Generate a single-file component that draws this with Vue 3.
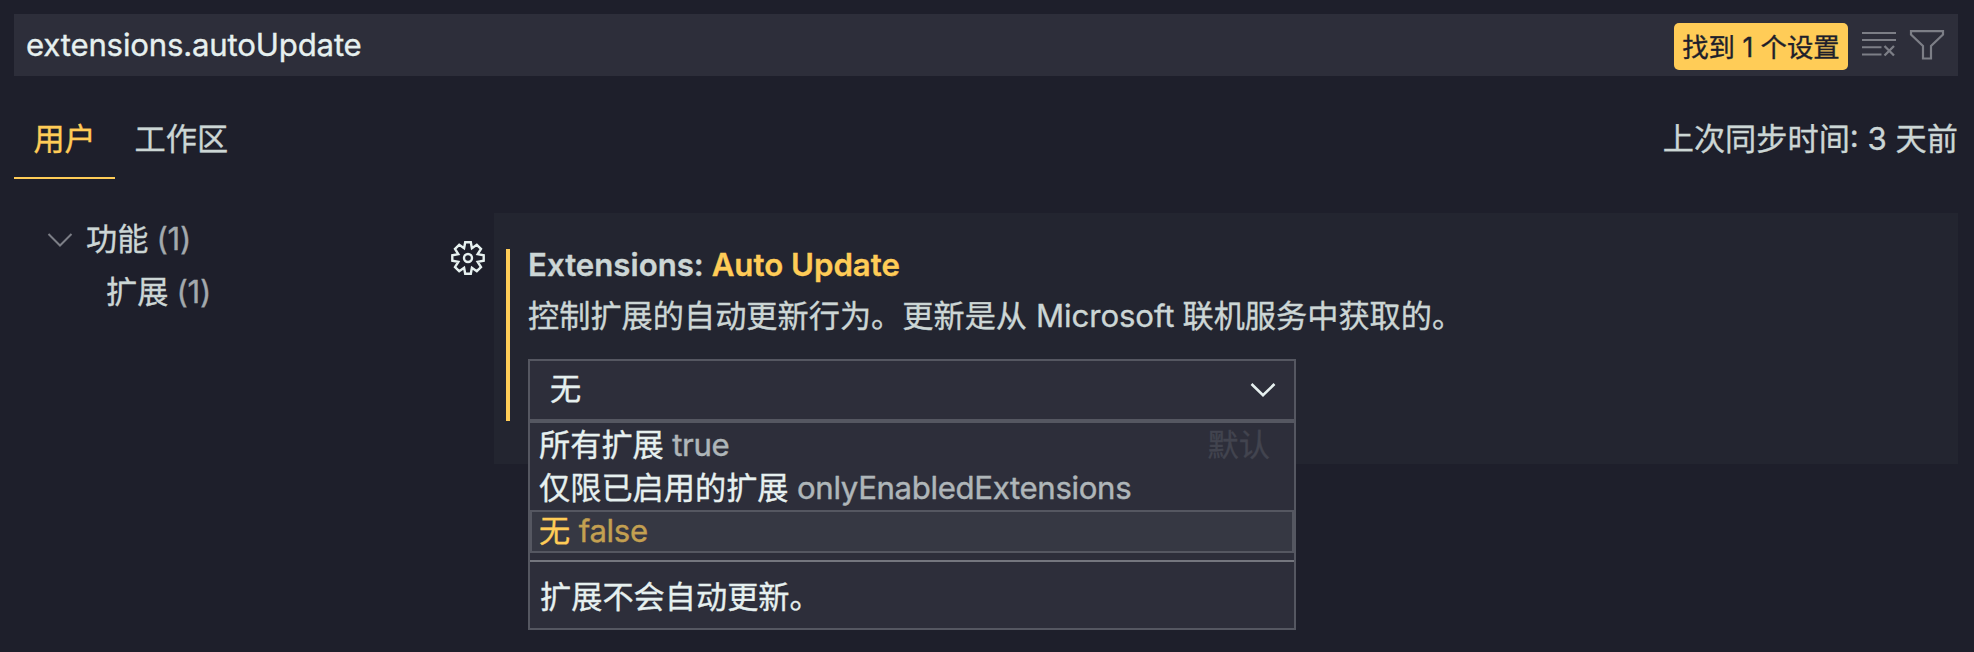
<script setup>
const options = [
  { label: '所有扩展', detail: 'true', tag: '默认' },
  { label: '仅限已启用的扩展', detail: 'onlyEnabledExtensions' },
  { label: '无', detail: 'false', active: true },
]
</script>

<template>
  <div class="settings">
    <header class="search">
      <span class="query">extensions.autoUpdate</span>
      <div class="badge">找到 1 个设置</div>
      <svg class="icon clear" width="36" height="36" viewBox="0 0 36 36" fill="none" stroke="#7c7e86" stroke-width="2">
        <path d="M1 5H35M1 12H35M1 19.3H20.5M1 26.5H20.5" />
        <path d="M23.5 18L33 27.5M33 18L23.5 27.5" stroke-width="2.3" />
      </svg>
      <svg class="icon funnel" width="36" height="36" viewBox="0 0 36 36" fill="none" stroke="#7c7e86" stroke-width="2.2">
        <path d="M2 3.2H34V6.5L22 18V30.5H14V18L2 6.5Z" />
      </svg>
    </header>

    <nav class="tabs">
      <div class="tab active">用户</div>
      <div class="tab">工作区</div>
      <div class="sync">上次同步时间: 3 天前</div>
    </nav>

    <main class="body">
      <aside class="toc">
        <div class="toc-row">
          <svg width="26" height="16" viewBox="0 0 26 16" fill="none" stroke="#7c7e86" stroke-width="2">
            <path d="M1.5 2L13 13.5L24.5 2" />
          </svg>
          <span>功能</span><span class="count">(1)</span>
        </div>
        <div class="toc-row child"><span>扩展</span><span class="count">(1)</span></div>
      </aside>

      <div class="gear">
        <svg width="34" height="34" viewBox="0 0 34 34" fill="none" stroke="#e6f0ef" stroke-width="2.4" stroke-linejoin="miter">
          <path d="M14.2 1.3H19.8L20.9 7.2L25.8 3.8L30 8L26.7 13.1L32.7 14.2V19.8L26.7 20.9L30 26L25.8 30.2L20.9 26.8L19.8 32.7H14.2L13.1 26.8L8.2 30.2L4 26L7.3 20.9L1.3 19.8V14.2L7.3 13.1L4 8L8.2 3.8L13.1 7.2Z" />
          <circle cx="17" cy="17" r="4" />
        </svg>
      </div>

      <section class="setting">
        <div class="content">
          <h3 class="title"><span class="category">Extensions: </span><span class="name">Auto Update</span></h3>
          <p class="desc">控制扩展的自动更新行为。更新是从<span class="ms">Microsoft</span>联机服务中获取的。</p>
          <div class="select">
            <span>无</span>
            <svg width="26" height="16" viewBox="0 0 26 16" fill="none" stroke="#e6f0ef" stroke-width="2.6">
              <path d="M1.5 2L13 13.3L24.5 2" />
            </svg>
            <div class="dropdown">
              <div v-for="o in options" :key="o.label" class="option" :class="{ active: o.active }">
                <span>{{ o.label }}</span><span class="detail">{{ o.detail }}</span>
                <span v-if="o.tag" class="tag">{{ o.tag }}</span>
              </div>
              <div class="hint">扩展不会自动更新。</div>
            </div>
          </div>
        </div>
      </section>
    </main>
  </div>
</template>

<style>
body { background: #1e1f2b; }
</style>

<style scoped>
* { box-sizing: border-box; }
.settings {
  height: 652px;
  padding: 14px 16px 0 14px;
  overflow: hidden;
  background: #1e1f2b;
  color: #ccd6d5;
  font-family: Inter, "Noto Sans CJK SC", sans-serif;
  font-size: 31.2px;
  line-height: 43.2px;
  white-space: nowrap;
  -webkit-text-stroke: 0.35px currentColor;
}
.search {
  display: flex;
  align-items: center;
  height: 62px;
  padding: 2px 13px 0 12px;
  background: #2d2e3a;
  color: #e6f0ef;
}
.query { flex: 1; letter-spacing: -0.2px; }
.badge {
  width: 174px;
  height: 47px;
  margin-right: 13px;
  border-radius: 5px;
  background: #ffcc57;
  color: #1e1f2b;
  font-size: 26.4px;
  line-height: 48px;
  text-align: center;
}
.icon { flex: none; }
.funnel { margin-left: 12px; }
.tabs { display: flex; height: 103px; padding-top: 23px; }
.tab {
  height: 80px;
  padding: 0 19.4px;
  line-height: 80px;
}
.tab.active { border-bottom: 2px solid #ffcc57; color: #ffcc57; }
.sync { margin-left: auto; line-height: 80px; }
.body { display: flex; padding-top: 34px; }
.toc { width: 435px; }
.toc-row { display: flex; align-items: center; height: 53px; padding-left: 33px; }
.toc-row svg { margin-right: 13px; }
.toc-row.child { padding-left: 92px; }
.count { margin-left: 8px; color: #a3a9ad; letter-spacing: -0.2px; }
.gear { width: 45px; padding: 28px 0 0 2px; }
.gear svg { display: block; }
.setting {
  flex: 1;
  height: 251px;
  padding: 36px 0 0 12px;
  background: #232530;
}
.content { height: 172px; padding-left: 18px; border-left: 4px solid #ffcc57; }
.title { margin: 0; font-size: 31.2px; line-height: 32px; font-weight: 600; }
.name { color: #ffcc57; }
.desc { margin: 0; padding-top: 13px; height: 78px; line-height: 44px; }
.ms { margin: 0 8px 0 9px; letter-spacing: -0.1px; }
.select {
  position: relative;
  display: flex;
  align-items: center;
  justify-content: space-between;
  width: 768px;
  height: 62px;
  padding: 0 18px 0 20px;
  border: 2px solid #555761;
  background: #2d2e3a;
  color: #e6f0ef;
}
.dropdown {
  position: absolute;
  top: 60px;
  left: -2px;
  width: 768px;
  height: 209px;
  border: 2px solid #555761;
  background: #2d2e3a;
}
.option {
  display: flex;
  align-items: center;
  height: 43px;
  padding: 0 24px 0 9px;
}
.option:first-child { margin-top: 1px; }
.option.active { background: #363843; color: #ffcc57; outline: 2px solid #555761; outline-offset: -2px; }
.detail { margin-left: 8.5px; letter-spacing: -0.35px; opacity: .7; }
.tag { margin-left: auto; color: #42444f; }
.hint {
  height: 69px;
  margin-top: 7px;
  padding: 0 10px;
  border-top: 2px solid #74767e;
  line-height: 71px;
}
</style>
